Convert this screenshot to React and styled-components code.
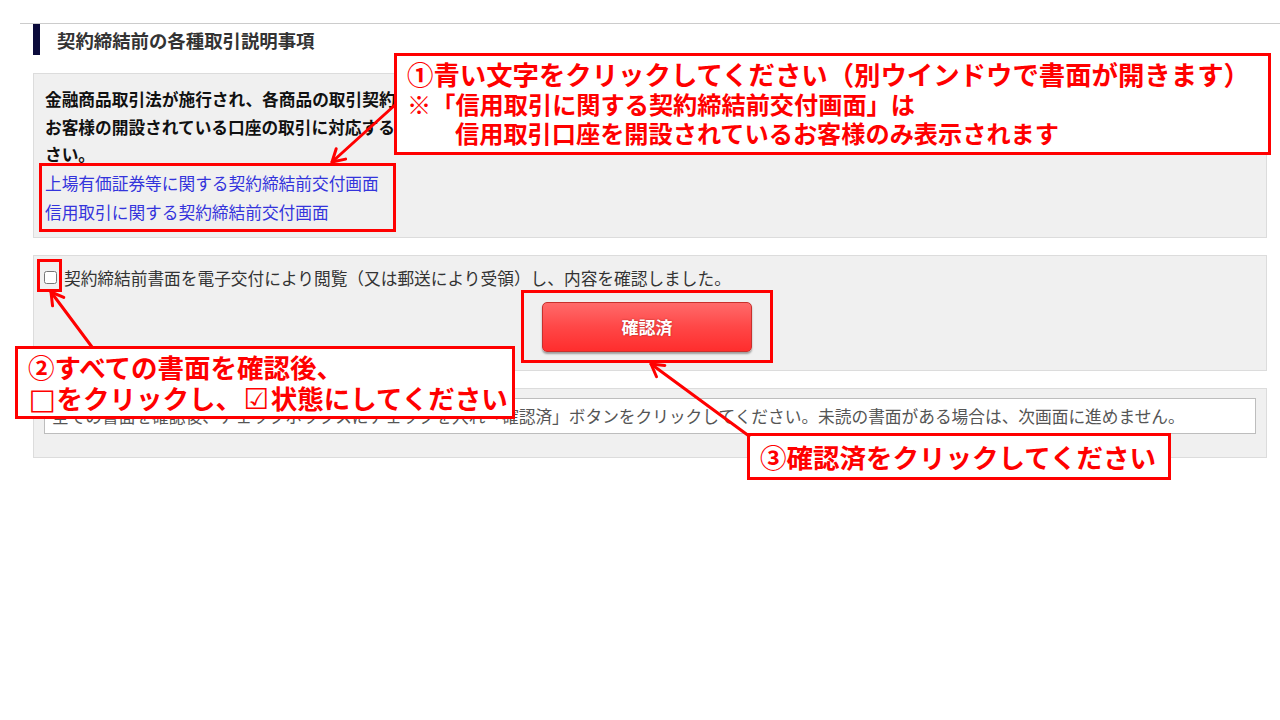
import React from "react";
import styled, { createGlobalStyle } from "styled-components";

const GlobalStyle = createGlobalStyle`
  html, body { margin: 0; padding: 0; background: #fff; }
  body {
    font-family: "Noto Sans CJK JP", "Noto Sans", "DejaVu Sans", sans-serif;
    color: #333;
  }
  * { box-sizing: border-box; }
`;

const Page = styled.div`
  position: relative;
  width: 1280px;
  min-height: 720px;
  overflow: hidden;
`;

const Section = styled.div`
  margin: 23px 0 0 20px;
  border-top: 1px solid #cccccc;
  padding: 0 13px;
`;

const Heading = styled.h2`
  margin: 0;
  height: 31px;
  display: flex;
  align-items: center;
  border-left: 7px solid #0b0b3b;
  padding-left: 17px;
  font-size: 18.4px;
  font-weight: 700;
  color: #333;
`;

const Panel = styled.div`
  margin-top: ${(p) => p.$gap}px;
  background: #f0f0f0;
  border: 1px solid #dcdcdc;
  padding: ${(p) => p.$pad};
`;

const Lead = styled.p`
  margin: 0;
  font-size: 16.7px;
  line-height: 27.5px;
  font-weight: 700;
  color: #111;
`;

const LinkList = styled.div`
  display: flex;
  flex-direction: column;
`;

const DocLink = styled.a`
  font-size: 16.7px;
  line-height: 29px;
  color: #3434dc;
  text-decoration: none;
  cursor: pointer;
`;

const CheckRow = styled.label`
  display: flex;
  align-items: center;
  height: 28px;
  font-size: 16.7px;
  color: #333;
`;

const CheckBox = styled.input`
  width: 13px;
  height: 13px;
  margin: 0 7px 0 0;
  flex: none;
`;

const ButtonRow = styled.div`
  display: flex;
  justify-content: center;
  margin-top: 10px;
  padding-right: 6px;
`;

const ConfirmButton = styled.button`
  width: 210px;
  height: 50px;
  border: 1px solid #c8302c;
  border-radius: 5px;
  background: linear-gradient(#ff6a6a, #ff4747 50%, #ff2d2d);
  box-shadow: 0 2px 2px rgba(0, 0, 0, 0.35);
  color: #fff;
  font-family: inherit;
  font-size: 17px;
  font-weight: 700;
  text-shadow: 0 0 2px rgba(120, 0, 0, 0.6);
  cursor: pointer;
`;

const NoticeBox = styled.div`
  background: #fff;
  border: 1px solid #bdbdbd;
  height: 36px;
  display: flex;
  align-items: center;
  padding-left: 7px;
  font-size: 16.7px;
  color: #555;
  white-space: nowrap;
  overflow: hidden;
`;

/* ---------- annotation overlay ---------- */

const Callout = styled.div`
  position: absolute;
  left: ${(p) => p.$x}px;
  top: ${(p) => p.$y}px;
  width: ${(p) => p.$w}px;
  height: ${(p) => p.$h}px;
  background: #fff;
  border: 3px solid #ff0000;
  padding: ${(p) => p.$pad};
  color: #ff0000;
  font-weight: 700;
  white-space: nowrap;
  z-index: 3;
`;

const CalloutLine = styled.div`
  font-size: ${(p) => p.$size}px;
  line-height: ${(p) => p.$lh}px;
  padding-left: ${(p) => p.$indent || 0}px;
`;

const Glyph = styled.span`
  display: inline-block;
  width: 1em;
  text-align: center;
  font-size: 1.08em;
  line-height: 1;
  font-family: "DejaVu Sans", sans-serif;
  font-weight: 400;
`;

const Frame = styled.div`
  position: absolute;
  left: ${(p) => p.$x}px;
  top: ${(p) => p.$y}px;
  width: ${(p) => p.$w}px;
  height: ${(p) => p.$h}px;
  border: 3px solid #ff0000;
  z-index: 2;
  pointer-events: none;
`;

const ArrowLayer = styled.svg`
  position: absolute;
  left: 0;
  top: 0;
  z-index: 4;
  pointer-events: none;
`;

function Arrow({ from, to }) {
  const dx = to[0] - from[0];
  const dy = to[1] - from[1];
  const len = Math.hypot(dx, dy);
  const ux = dx / len;
  const uy = dy / len;
  const L = 12;
  const W = 7;
  const bx = to[0] - ux * L;
  const by = to[1] - uy * L;
  const p1 = [bx - uy * W, by + ux * W];
  const p2 = [bx + uy * W, by - ux * W];
  return (
    <g stroke="#ff0000" strokeWidth="3" fill="none" strokeLinecap="round" strokeLinejoin="round">
      <line x1={from[0]} y1={from[1]} x2={to[0]} y2={to[1]} />
      <polyline points={`${p1[0]},${p1[1]} ${to[0]},${to[1]} ${p2[0]},${p2[1]}`} />
    </g>
  );
}

export default function App() {
  return (
    <>
      <GlobalStyle />
      <Page>
        <Section>
          <Heading>契約締結前の各種取引説明事項</Heading>

          <Panel $gap={18} $pad="12px 11px 10px">
            <Lead>
              金融商品取引法が施行され、各商品の取引契約締結前に、契約締結前交付書面を交付することが義務付けられております。
              <br />
              お客様の開設されている口座の取引に対応する契約締結前交付画面を下記よりご確認いただき、内容をご理解のうえ、チェックボックスにチェックを入れてください。
            </Lead>
            <LinkList>
              <DocLink>上場有価証券等に関する契約締結前交付画面</DocLink>
              <DocLink>信用取引に関する契約締結前交付画面</DocLink>
            </LinkList>
          </Panel>

          <Panel $gap={17} $pad="8px 10px 18px">
            <CheckRow>
              <CheckBox type="checkbox" />
              契約締結前書面を電子交付により閲覧（又は郵送により受領）し、内容を確認しました。
            </CheckRow>
            <ButtonRow>
              <ConfirmButton type="button">確認済</ConfirmButton>
            </ButtonRow>
          </Panel>

          <Panel $gap={17} $pad="9px 10px 23px">
            <NoticeBox>
              全ての書面を確認後、チェックボックスにチェックを入れ「確認済」ボタンをクリックしてください。未読の書面がある場合は、次画面に進めません。
            </NoticeBox>
          </Panel>
        </Section>

        <Frame $x={39} $y={163} $w={357} $h={69} />
        <Frame $x={37} $y={259} $w={25} $h={33} />
        <Frame $x={521} $y={290} $w={252} $h={73} />

        <Callout $x={394} $y={53} $w={877} $h={102} $pad="3px 10px 0">
          <CalloutLine $size={26.4} $lh={29.5}>
            ①青い文字をクリックしてください（別ウインドウで書面が開きます）
          </CalloutLine>
          <CalloutLine $size={24.2} $lh={29.5}>
            ※「信用取引に関する契約締結前交付画面」は
          </CalloutLine>
          <CalloutLine $size={24.2} $lh={29.5} $indent={48}>
            信用取引口座を開設されているお客様のみ表示されます
          </CalloutLine>
        </Callout>

        <Callout $x={15} $y={346} $w={500} $h={73} $pad="2px 10px 0">
          <CalloutLine $size={26.5} $lh={31}>
            ②すべての書面を確認後、
          </CalloutLine>
          <CalloutLine $size={26.5} $lh={31}>
            <Glyph>□</Glyph>をクリックし、<Glyph>☑</Glyph>状態にしてください
          </CalloutLine>
        </Callout>

        <Callout $x={747} $y={433} $w={424} $h={47} $pad="0 10px">
          <CalloutLine $size={26.5} $lh={41}>
            ③確認済をクリックしてください
          </CalloutLine>
        </Callout>

        <ArrowLayer width="1280" height="720" viewBox="0 0 1280 720">
          <Arrow from={[395, 105]} to={[332, 162]} />
          <Arrow from={[92, 347]} to={[51, 292]} />
          <Arrow from={[749, 436]} to={[651, 364]} />
        </ArrowLayer>
      </Page>
    </>
  );
}
